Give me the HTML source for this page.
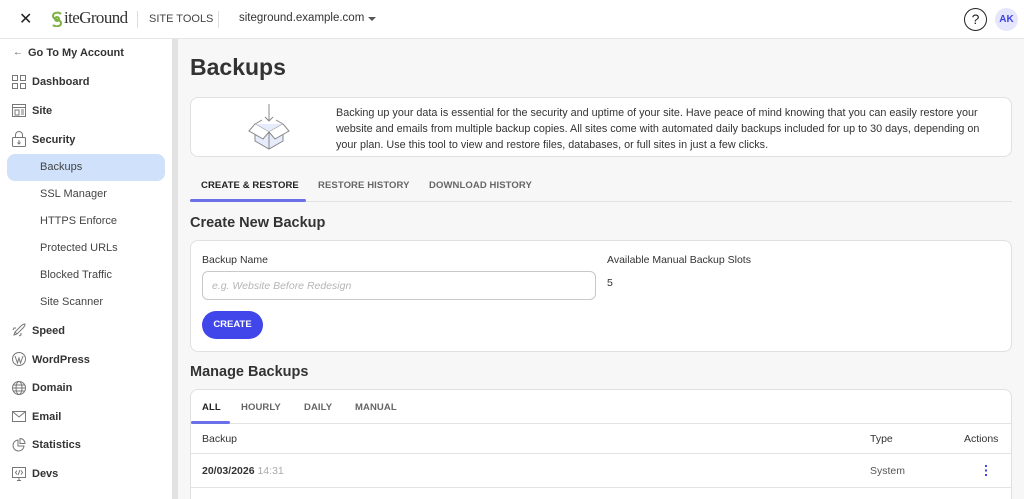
<!DOCTYPE html>
<html><head><meta charset="utf-8"><style>
*{box-sizing:border-box;margin:0;padding:0}
html,body{width:1024px;height:499px;overflow:hidden}
body{font-family:"Liberation Sans",sans-serif;color:#333;background:#f7f7f7;position:relative}
.hdr{position:absolute;left:0;top:0;width:1024px;height:39px;background:#fff;border-bottom:1px solid #e6e6e6}
.abs{position:absolute;white-space:nowrap}
.side{position:absolute;left:0;top:39px;width:172px;height:460px;background:#fff}
.sb{position:absolute;left:172px;top:39px;width:6px;height:460px;background:#e2e2e2}
.nav{position:absolute;left:32px;font-size:11px;font-weight:bold;color:#333}
.sub{position:absolute;left:40px;font-size:11px;color:#444}
.ic{position:absolute;left:12px}
.card{position:absolute;left:190px;width:822px;background:#fff;border:1px solid #e0e0e0;border-radius:8px;overflow:hidden}
.tab{position:absolute;font-size:9.5px;font-weight:bold;color:#666;letter-spacing:.1px}
</style></head><body>
<div class="hdr">
 <div class="abs" style="left:19px;top:9px;font-size:16px;color:#222">✕</div>
 <svg class="abs" style="left:50px;top:11px" width="14" height="16" fill="none" stroke="#7cb342" stroke-width="2"><path d="M11 3C9 1 3 1 3 5s8 3 8 7-6 4-8 2"/><circle cx="7" cy="8" r="2"/></svg>
 <div class="abs" style="left:64px;top:8px;font-size:17px;color:#333;font-family:'Liberation Serif',serif;letter-spacing:-.6px">iteGround</div>
 <div class="abs" style="left:137px;top:11px;width:1px;height:17px;background:#ddd"></div>
 <div class="abs" style="left:149px;top:13px;font-size:11px;color:#444">SITE TOOLS</div>
 <div class="abs" style="left:218px;top:11px;width:1px;height:17px;background:#ddd"></div>
 <div class="abs" style="left:239px;top:12px;font-size:11.5px;color:#333">siteground.example.com</div>
 <div class="abs" style="left:368px;top:17px;width:0;height:0;border-left:4px solid transparent;border-right:4px solid transparent;border-top:4px solid #555"></div>
 <div class="abs" style="left:964px;top:8px;width:23px;height:23px;border:1.3px solid #222;border-radius:50%;text-align:center;font-size:14px;line-height:21px;color:#222">?</div>
 <div class="abs" style="left:995px;top:8px;width:23px;height:23px;border-radius:50%;background:#e5e6fb;text-align:center;font-size:10px;font-weight:bold;line-height:23px;color:#3e44e8">AK</div>
</div>
<div class="side">
 <div class="abs" style="left:13px;top:8px;font-size:10px;color:#555">←</div>
 <div class="nav" style="left:28px;top:8px">Go To My Account</div>
 <svg class="ic" style="top:36px" width="14" height="14" fill="none" stroke="#777"><rect x=".5" y=".5" width="5" height="5"/><rect x="8.5" y=".5" width="5" height="5"/><rect x=".5" y="8.5" width="5" height="5"/><rect x="8.5" y="8.5" width="5" height="5"/></svg>
 <div class="nav" style="top:37px">Dashboard</div>
 <svg class="ic" style="top:65px" width="14" height="13" fill="none" stroke="#777"><rect x=".5" y=".5" width="13" height="12"/><path d="M.5 3.5h13M3 6h4v5H3zM9 6h3M9 8h3M9 10h3"/></svg>
 <div class="nav" style="top:66px">Site</div>
 <svg class="ic" style="top:92px" width="14" height="16" fill="none" stroke="#777"><rect x=".5" y="6.5" width="13" height="9" rx="1"/><path d="M3.5 6.5V4a3.5 3.5 0 017 0v2.5M7 9v4M5.5 11.5L7 13l1.5-1.5"/></svg>
 <div class="nav" style="top:95px">Security</div>
 <div class="abs" style="left:7px;top:115px;width:158px;height:27px;background:#cfe1fb;border-radius:8px"></div>
 <div class="sub" style="top:122px">Backups</div>
 <div class="sub" style="top:149px">SSL Manager</div>
 <div class="sub" style="top:176px">HTTPS Enforce</div>
 <div class="sub" style="top:203px">Protected URLs</div>
 <div class="sub" style="top:230px">Blocked Traffic</div>
 <div class="sub" style="top:257px">Site Scanner</div>
 <svg class="ic" style="top:284px" width="14" height="14" fill="none" stroke="#777"><path d="M2 12l3-1 6-6c2-2 2-4 2-4s-2 0-4 2L3 9zM5 11l-2-2M4 5H2l-1 2M9 10v2l-2 1"/></svg>
 <div class="nav" style="top:286px">Speed</div>
 <svg class="ic" style="top:313px" width="14" height="14" fill="none" stroke="#777"><circle cx="7" cy="7" r="6.5"/><path d="M3 4l2.5 7L7 6l1.5 5L11 4"/></svg>
 <div class="nav" style="top:315px">WordPress</div>
 <svg class="ic" style="top:342px" width="14" height="14" fill="none" stroke="#777"><circle cx="7" cy="7" r="6.5"/><ellipse cx="7" cy="7" rx="3" ry="6.5"/><path d="M.5 7h13M1.5 4h11M1.5 10h11"/></svg>
 <div class="nav" style="top:343px">Domain</div>
 <svg class="ic" style="top:372px" width="14" height="11" fill="none" stroke="#777"><rect x=".5" y=".5" width="13" height="10"/><path d="M.5 .5L7 6l6.5-5.5"/></svg>
 <div class="nav" style="top:372px">Email</div>
 <svg class="ic" style="top:399px" width="14" height="14" fill="none" stroke="#777"><path d="M6 2a5.5 5.5 0 106 6H6z"/><path d="M8 .5v5h5A5 5 0 008 .5z"/></svg>
 <div class="nav" style="top:400px">Statistics</div>
 <svg class="ic" style="top:428px" width="14" height="14" fill="none" stroke="#777"><rect x=".5" y=".5" width="13" height="10"/><path d="M5 13.5h4M7 10.5v3M5 3.5L3.5 5.5 5 7.5M9 3.5l1.5 2L9 7.5M8 3L6 8"/></svg>
 <div class="nav" style="top:429px">Devs</div>
</div>
<div class="sb"></div>
<div class="abs" style="left:190px;top:54px;font-size:23px;font-weight:bold;color:#333">Backups</div>
<div class="card" style="top:97px;height:60px">
 <svg class="abs" style="left:54px;top:5px" width="48" height="50" fill="none" stroke="#888" stroke-width="1"><path d="M24 1v17M20 14l4 4 4-4"/><path d="M10 21v17l14 8 14-8V21" fill="#e6ecfb"/><path d="M10 21l14 8 14-8M24 29v17"/><path d="M10 21l-6 7 14 8 6-7M38 21l6 7-14 8-6-7" fill="#fff"/><path d="M17 17l-7 4M31 17l7 4"/></svg>
 <div class="abs" style="left:145px;top:7px;font-size:10.8px;line-height:16px;color:#333;white-space:normal;width:655px">Backing up your data is essential for the security and uptime of your site. Have peace of mind knowing that you can easily restore your website and emails from multiple backup copies. All sites come with automated daily backups included for up to 30 days, depending on your plan. Use this tool to view and restore files, databases, or full sites in just a few clicks.</div>
</div>
<div class="tab" style="left:201px;top:180px;color:#222">CREATE &amp; RESTORE</div>
<div class="tab" style="left:318px;top:180px">RESTORE HISTORY</div>
<div class="tab" style="left:429px;top:180px">DOWNLOAD HISTORY</div>
<div class="abs" style="left:190px;top:201px;width:822px;height:1px;background:#e3e3e3"></div>
<div class="abs" style="left:190px;top:199px;width:116px;height:3px;background:#6b6fe8;border-radius:2px"></div>
<div class="abs" style="left:190px;top:215px;font-size:14.5px;font-weight:bold;color:#333">Create New Backup</div>
<div class="card" style="top:240px;height:112px">
 <div class="abs" style="left:11px;top:13px;font-size:10.5px;color:#333">Backup Name</div>
 <div class="abs" style="left:11px;top:30px;width:394px;height:29px;border:1px solid #c8c8c8;border-radius:6px"></div>
 <div class="abs" style="left:21px;top:39px;font-size:10.5px;font-style:italic;color:#b5b5b5">e.g. Website Before Redesign</div>
 <div class="abs" style="left:416px;top:13px;font-size:10.5px;color:#333">Available Manual Backup Slots</div>
 <div class="abs" style="left:416px;top:36px;font-size:10.5px;color:#333">5</div>
 <div class="abs" style="left:11px;top:70px;width:61px;height:28px;border-radius:14px;background:#4146ea;color:#fff;font-size:9.5px;font-weight:bold;text-align:center;line-height:28px">CREATE</div>
</div>
<div class="abs" style="left:190px;top:364px;font-size:14.5px;font-weight:bold;color:#333">Manage Backups</div>
<div class="card" style="top:389px;height:118px">
 <div class="tab" style="left:11px;top:12px;color:#222">ALL</div>
 <div class="tab" style="left:50px;top:12px">HOURLY</div>
 <div class="tab" style="left:113px;top:12px">DAILY</div>
 <div class="tab" style="left:164px;top:12px">MANUAL</div>
 <div class="abs" style="left:0;top:33px;width:820px;height:1px;background:#e3e3e3"></div>
 <div class="abs" style="left:0;top:31px;width:39px;height:3px;background:#6b6fe8;border-radius:2px"></div>
 <div class="abs" style="left:11px;top:43px;font-size:10.5px;color:#333">Backup</div>
 <div class="abs" style="left:679px;top:43px;font-size:10.5px;color:#333">Type</div>
 <div class="abs" style="left:773px;top:43px;font-size:10.5px;color:#333">Actions</div>
 <div class="abs" style="left:0;top:63px;width:820px;height:1px;background:#e3e3e3"></div>
 <div class="abs" style="left:11px;top:75px;font-size:10.5px;color:#333;font-weight:bold">20/03/2026 <span style="color:#aaa;font-weight:normal">14:31</span></div>
 <div class="abs" style="left:679px;top:75px;font-size:10.5px;color:#555">System</div>
 <div class="abs" style="left:794px;top:75px;width:2px;height:11px;background:repeating-linear-gradient(#4146ea 0 2px,transparent 2px 4.5px)"></div>
 <div class="abs" style="left:0;top:97px;width:820px;height:1px;background:#e3e3e3"></div>
</div>
</body></html>
